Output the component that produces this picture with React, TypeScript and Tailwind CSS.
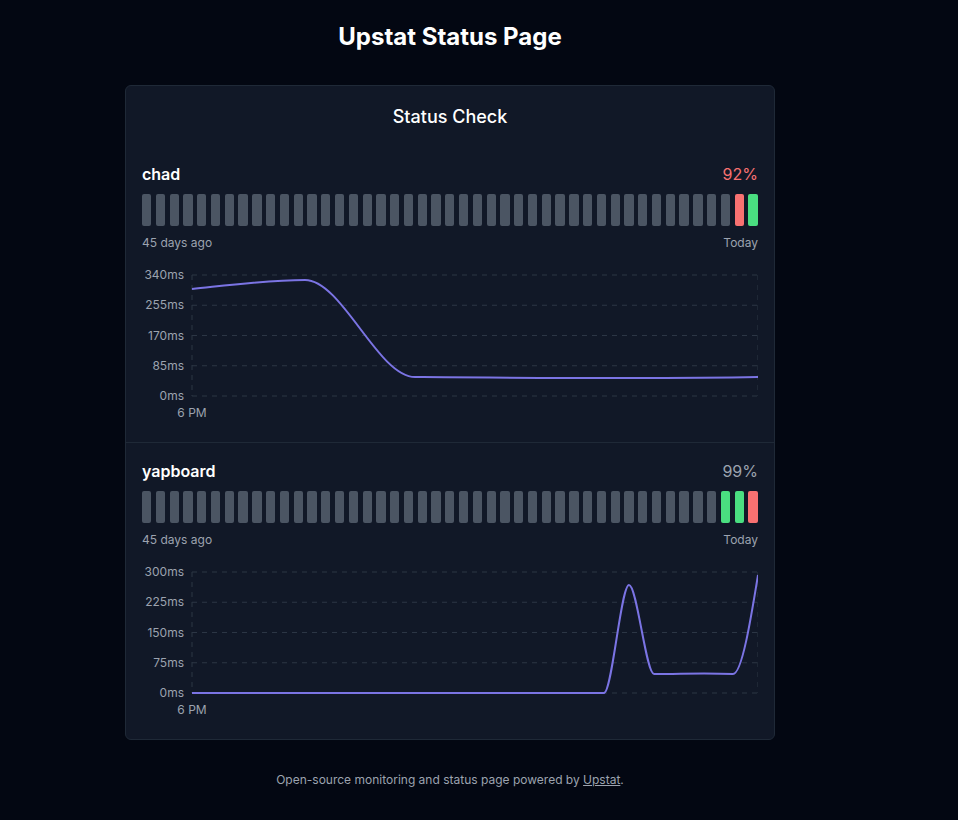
import React from "react"

type Bar = "none" | "up" | "down"

const monitors: {
  name: string
  uptime: string
  uptimeClass: string
  bars: Bar[]
  ticks: string[]
  path: string
}[] = [
  {
    name: "chad",
    uptime: "92%",
    uptimeClass: "text-[#f87171]",
    bars: [...Array(43).fill("none"), "down", "up"],
    ticks: ["340ms", "255ms", "170ms", "85ms", "0ms"],
    path: "M50,38 C88,34 125,29 163,29 C200,29 236,126 273,126 C400,127 520,128 616,126",
  },
  {
    name: "yapboard",
    uptime: "99%",
    uptimeClass: "text-[#9ca3af]",
    bars: [...Array(42).fill("none"), "up", "up", "down"],
    ticks: ["300ms", "225ms", "150ms", "75ms", "0ms"],
    path: "M50,145 L462,145 C470,145 479,37 487,37 C495,37 504,126 512,126 C540,126 560,124.5 591,126 C600,126 609,70 616,27",
  },
]

const barColor: Record<Bar, string> = {
  none: "bg-[#4b5563]",
  up: "bg-[#4ade80]",
  down: "bg-[#f87171]",
}

const Chart = ({ ticks, path }: { ticks: string[]; path: string }) => {
  const top = 24
  const bottom = 145
  const step = (bottom - top) / 4
  return (
    <svg width="616" height="175" className="block">
      {ticks.map((t, i) => {
        const y = top + step * i
        return (
          <g key={t}>
            <line x1="50" x2="616" y1={y} y2={y} stroke="#2c3645" strokeDasharray="5 5" />
            <text x="42" y={y + 4} textAnchor="end" fontSize="12" fill="#9ca3af">
              {t}
            </text>
          </g>
        )
      })}
      <line x1="50" x2="50" y1={top} y2={bottom} stroke="#2c3645" strokeDasharray="5 5" />
      <line x1="616" x2="616" y1={top} y2={bottom} stroke="#2c3645" strokeDasharray="5 5" />
      <text x="50" y="166" textAnchor="middle" fontSize="12" fill="#9ca3af">
        6 PM
      </text>
      <path d={path} fill="none" stroke="#7b74e4" strokeWidth="2" />
    </svg>
  )
}

const App = () => {
  return (
    <main className="min-h-screen w-full bg-[#030712] font-['Inter',sans-serif] text-white">
      <div className="w-[900px] flex flex-col items-center pt-[21px] pb-10">
        <h1 className="text-2xl font-bold leading-8">Upstat Status Page</h1>
        <div className="mt-8 w-[650px] rounded-md border border-[#1f2937] bg-[#111827]">
          <div className="pt-[17px] pb-[15px] text-center text-lg font-medium leading-7">Status Check</div>
          {monitors.map((m, idx) => (
            <section key={m.name} className={idx > 0 ? "border-t border-[#1f2937] p-4" : "p-4"}>
              <div className="flex items-center justify-between leading-6">
                <span className="font-semibold">{m.name}</span>
                <span className={m.uptimeClass}>{m.uptime}</span>
              </div>
              <div className="mt-2 flex h-8 gap-[4.5px]">
                {m.bars.map((b, i) => (
                  <div key={i} className={`flex-1 rounded-xs ${barColor[b]}`} />
                ))}
              </div>
              <div className="mt-[9px] flex justify-between text-xs leading-4 text-[#9ca3af]">
                <span>45 days ago</span>
                <span>Today</span>
              </div>
              <Chart ticks={m.ticks} path={m.path} />
            </section>
          ))}
        </div>
        <p className="mt-8 text-xs text-[#9ca3af]">
          Open-source monitoring and status page powered by{" "}
          <a href="#" className="underline">
            Upstat
          </a>
          .
        </p>
      </div>
    </main>
  )
}

export default App
